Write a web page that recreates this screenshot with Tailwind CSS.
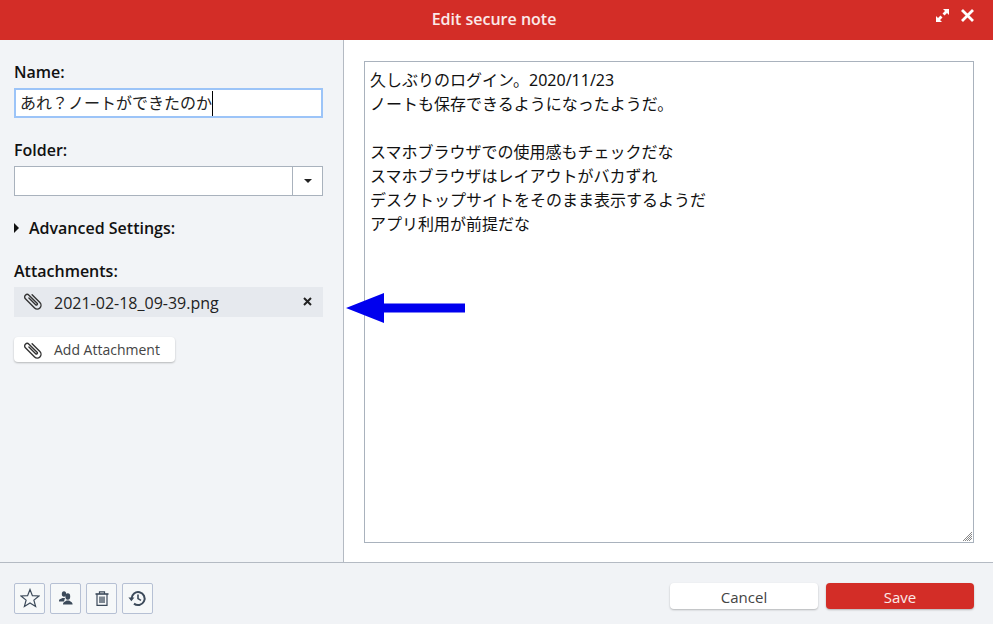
<!DOCTYPE html>
<html lang="ja">
<head>
    <meta charset="UTF-8">
    <title>Edit secure note</title>
    <script src="https://cdn.jsdelivr.net/npm/@tailwindcss/browser@4"></script>
</head>
<body class="bg-white text-black font-['Open_Sans','Noto_Sans_CJK_JP',sans-serif] overflow-hidden">
    <div class="relative flex flex-col w-[993px] h-[624px]">
        <!-- Title bar -->
        <header class="relative flex items-center justify-center h-10 bg-[#d32d27] text-white">
            <h1 class="text-[16px] font-semibold text-white/90 pr-[5px] pb-[2px]">Edit secure note</h1>
            <div class="absolute right-[19px] top-[9px] flex items-center gap-[12px]">
                <svg width="13" height="13" viewBox="0 0 13 13" fill="#fff">
                    <path d="M7 0H13V6L11 4L8.5 6.5L6.5 4.5L9 2Z"/>
                    <path d="M6 13H0V7L2 9L4.5 6.5L6.5 8.5L4 11Z"/>
                </svg>
                <svg width="13" height="13" viewBox="0 0 13 13" stroke="#fff" stroke-width="2.8" fill="none">
                    <path d="M1 1L12 12M12 1L1 12"/>
                </svg>
            </div>
        </header>

        <div class="flex flex-1 min-h-0">
            <!-- Left column -->
            <aside class="w-[344px] shrink-0 bg-[#f2f4f7] border-r border-[#b4bac3] pl-[14px] pr-[20px] pt-[21px]">
                <label class="block text-[16px] leading-[22px] font-semibold text-[#111]">Name:</label>
                <div class="mt-[5px] flex items-center h-[30px] bg-white border-2 border-[#9cc4f8] pl-[4px] text-[16px] text-[#222]">
                    <span>あれ？ノートができたのか</span><span class="w-px h-[25px] bg-black"></span>
                </div>

                <label class="block mt-[21px] text-[16px] leading-[22px] font-semibold text-[#111]">Folder:</label>
                <div class="mt-[5px] flex h-[30px] bg-white border border-[#a9b2bd]">
                    <div class="flex-1"></div>
                    <div class="flex items-center justify-center w-[30px] border-l border-[#a9b2bd]">
                        <div class="w-0 h-0 border-x-[4px] border-x-transparent border-t-[4px] border-t-[#222]"></div>
                    </div>
                </div>

                <div class="mt-[21px] flex items-center h-[22px]">
                    <div class="w-0 h-0 border-y-[5px] border-y-transparent border-l-[5px] border-l-[#111]"></div>
                    <span class="ml-[10px] text-[16px] font-semibold text-[#111]">Advanced Settings:</span>
                </div>

                <label class="block mt-[21px] text-[16px] leading-[22px] font-semibold text-[#111]">Attachments:</label>
                <div class="mt-[5px] flex items-center h-[30px] bg-[#e6e9ee] pl-[10px] pr-[11px]">
                    <svg class="mb-[2px]" width="18" height="18" viewBox="0 0 18 18" fill="none" stroke="#333" stroke-width="1.4" stroke-linecap="round">
                        <path transform="translate(9 9) rotate(-45) scale(1) translate(-5.75 -12)" d="M9.5 7V18A3.75 3.75 0 0 1 2 18V5A2.5 2.5 0 0 1 7 5V16.5A1 1 0 0 1 5 16.5V7"/>
                    </svg>
                    <span class="ml-[12px] pt-[2px] flex-1 text-[16px] text-[#222]">2021-02-18_09-39.png</span>
                    <svg class="mb-[2px]" width="9" height="9" viewBox="0 0 9 9" stroke="#222" stroke-width="2" fill="none">
                        <path d="M1 1L8 8M8 1L1 8"/>
                    </svg>
                </div>

                <button class="mt-[20px] flex items-center h-[25px] w-[161px] bg-white rounded-[4px] shadow-[0_1px_2px_rgba(0,0,0,0.25)] pl-[10px]">
                    <svg width="18" height="18" viewBox="0 0 18 18" fill="none" stroke="#333" stroke-width="1.4" stroke-linecap="round">
                        <path transform="translate(9 9) rotate(-45) scale(1) translate(-5.75 -12)" d="M9.5 7V18A3.75 3.75 0 0 1 2 18V5A2.5 2.5 0 0 1 7 5V16.5A1 1 0 0 1 5 16.5V7"/>
                    </svg>
                    <span class="ml-[12px] text-[14px] text-[#444]">Add Attachment</span>
                </button>
            </aside>

            <!-- Note body -->
            <main class="flex-1 pl-[20px] pr-[19px] pt-[21px] pb-[19px]">
                <div class="relative h-full border border-[#a9b2bd] pl-[5px] pt-[6px] text-[16px] leading-[24px] text-[#111] font-['Noto_Sans','Noto_Sans_CJK_JP',sans-serif] whitespace-pre-line">久しぶりのログイン。2020/11/23
ノートも保存できるようになったようだ。

スマホブラウザでの使用感もチェックだな
スマホブラウザはレイアウトがバカずれ
デスクトップサイトをそのまま表示するようだ
アプリ利用が前提だな
                    <svg class="absolute right-0 bottom-0" width="11" height="11" viewBox="0 0 11 11" stroke="#888" stroke-width="1" fill="none">
                        <path d="M1 10L10 1M3 10L10 3M5 10L10 5M7 10L10 7"/>
                    </svg>
                </div>
            </main>
        </div>

        <!-- Footer -->
        <footer class="flex items-center justify-between h-[62px] bg-[#f1f3f6] border-t border-[#b4bac3] pl-[14px] pr-[19px]">
            <div class="flex gap-[5px] mt-[9px]">
                <button class="flex items-center justify-center w-[31px] h-[31px] bg-white/40 border border-[#b6c0d4] rounded-[2px]">
                    <svg width="20" height="20" viewBox="0 0 20 20" fill="none" stroke="#3c4a5a" stroke-width="1.2">
                        <path d="M10 1.5L12.4 7.7L19 8L13.9 12.1L15.6 18.5L10 14.9L4.4 18.5L6.1 12.1L1 8L7.6 7.7Z"/>
                    </svg>
                </button>
                <button class="flex items-center justify-center w-[31px] h-[31px] bg-white/40 border border-[#b6c0d4] rounded-[2px]">
                    <svg width="14" height="14" viewBox="0 0 14 14" fill="#3c4a5a">
                        <ellipse cx="5" cy="3" rx="2.2" ry="2.8"/>
                        <path d="M0 9.5C0 8 2.4 7.8 3.5 7L6 7L5 10.5H0Z"/>
                        <ellipse cx="8.8" cy="5.5" rx="2.4" ry="3.2"/>
                        <path d="M4 13.5C4 11 6.4 10.6 7.6 9.6H10C11.2 10.6 13.6 11 13.6 13.5Z"/>
                    </svg>
                </button>
                <button class="flex items-center justify-center w-[31px] h-[31px] bg-white/40 border border-[#b6c0d4] rounded-[2px]">
                    <svg width="14" height="15" viewBox="0 0 14 15" fill="none" stroke="#3c4a5a" stroke-width="1.2">
                        <path d="M0.5 3H13.5" stroke-width="1.6"/>
                        <path d="M4.5 3V0.8H9.5V3"/>
                        <path d="M2 3V14.4H12V3"/>
                        <path d="M5 5.5V12M7 5.5V12M9 5.5V12" stroke-width="1.3"/>
                    </svg>
                </button>
                <button class="flex items-center justify-center w-[31px] h-[31px] bg-white/40 border border-[#b6c0d4] rounded-[2px]">
                    <svg width="19" height="17" viewBox="0 0 19 17" fill="none" stroke="#3c4a5a" stroke-width="2">
                        <path d="M3.6 8.5A6.5 6.5 0 1 1 6 13.6"/>
                        <path d="M0.4 7.5H6.4L3.4 11.2Z" fill="#3c4a5a" stroke="none"/>
                        <path d="M10 4.5V8.6L13 10.4" stroke-width="1.6"/>
                    </svg>
                </button>
            </div>
            <div class="flex gap-[8px] mt-[5px]">
                <button class="w-[148px] h-[26px] pt-[2px] bg-white rounded-[4px] shadow-[0_1px_2px_rgba(0,0,0,0.25)] text-[15px] text-[#444]">Cancel</button>
                <button class="w-[148px] h-[26px] pt-[2px] bg-[#d32d27] rounded-[4px] shadow-[0_1px_2px_rgba(0,0,0,0.25)] text-[15px] text-white/90">Save</button>
            </div>
        </footer>

        <!-- Annotation arrow -->
        <svg class="absolute left-[346px] top-[293px]" width="120" height="30" viewBox="0 0 120 30" fill="#0000ee">
            <path d="M0 15L38 0V10.5H119V19.5H38V30Z"/>
        </svg>
    </div>
</body>
</html>
